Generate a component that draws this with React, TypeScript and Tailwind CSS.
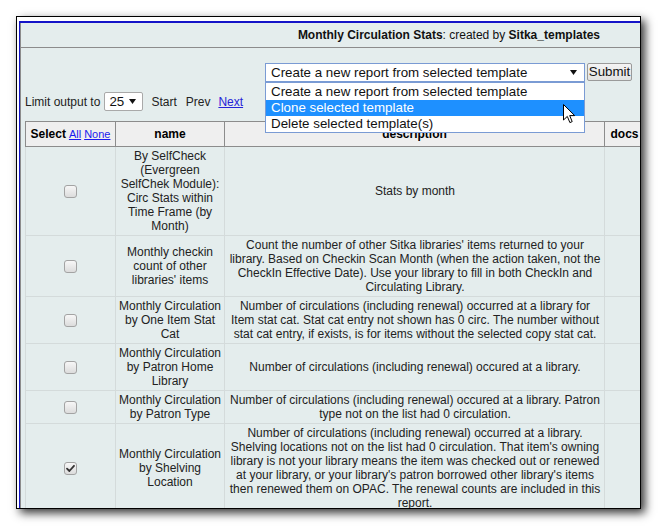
import React from "react";

const rows: { name: string; desc: string | string[]; checked?: boolean }[] = [
  {
    name: "By SelfCheck (Evergreen SelfChek Module): Circ Stats within Time Frame (by Month)",
    desc: "Stats by month",
  },
  {
    name: "Monthly checkin count of other libraries' items",
    desc: [
      "Count the number of other Sitka libraries' items returned to your",
      "library. Based on Checkin Scan Month (when the action taken, not the",
      "CheckIn Effective Date). Use your library to fill in both CheckIn and",
      "Circulating Library.",
    ],
  },
  {
    name: "Monthly Circulation by One Item Stat Cat",
    desc: "Number of circulations (including renewal) occurred at a library for Item stat cat. Stat cat entry not shown has 0 circ. The number without stat cat entry, if exists, is for items without the selected copy stat cat.",
  },
  {
    name: "Monthly Circulation by Patron Home Library",
    desc: "Number of circulations (including renewal) occured at a library.",
  },
  {
    name: "Monthly Circulation by Patron Type",
    desc: "Number of circulations (including renewal) occured at a library. Patron type not on the list had 0 circulation.",
  },
  {
    name: "Monthly Circulation by Shelving Location",
    desc: "Number of circulations (including renewal) occurred at a library. Shelving locations not on the list had 0 circulation. That item's owning library is not your library means the item was checked out or renewed at your library, or your library's patron borrowed other library's items then renewed them on OPAC. The renewal counts are included in this report.",
    checked: true,
  },
];

function Checkbox({ checked }: { checked?: boolean }) {
  return (
    <div className="w-[13px] h-[13px] rounded-[3px] border border-[#a3a3a3] bg-gradient-to-b from-[#f7f7f7] to-[#dcdcdc] flex items-center justify-center">
      {checked && (
        <svg width="9" height="9" viewBox="0 0 9 9">
          <path d="M1 4.6 L3.4 7 L8 1.8" fill="none" stroke="#333" strokeWidth="1.8" strokeLinecap="round" strokeLinejoin="round" />
        </svg>
      )}
    </div>
  );
}

function Tri({ className }: { className?: string }) {
  return (
    <svg width="7" height="5" viewBox="0 0 7 5" className={className}>
      <path d="M0 0 H7 L3.5 5 Z" fill="#111" />
    </svg>
  );
}

export default function App() {
  return (
    <div className="w-[658px] h-[526px] bg-white pl-[16px] pt-[16px] font-['Liberation_Sans',Arial,sans-serif] text-[12px] leading-[14px] text-[#222]">
      <div className="w-[625px] h-[493px] border border-black bg-white pl-[2px] pt-[4px] shadow-[4px_4px_9px_rgba(0,0,0,0.8)] overflow-hidden">
        <div className="h-full border-l border-t-2 border-[#1414c8]">
          <div className="h-full border-l border-[#8c8c8c] bg-[#e4eded]">
            {/* title bar */}
            <div className="h-[25px] border-b border-[#8c8c8c] flex items-center justify-end pr-[40px] text-[#111]">
              <span className="font-bold">Monthly Circulation Stats</span>
              <span>: created by&nbsp;</span>
              <span className="font-bold">Sitka_templates</span>
            </div>

            {/* action select row */}
            <div className="pt-[15px] pr-[8px] flex justify-end items-start">
              <div className="relative z-10">
                <div className="w-[320px] h-[19px] border border-[#7a9bd4] bg-white flex items-center pl-[5px] pr-[7px] text-[13.33px] leading-[16px] text-[#111]">
                  <span className="flex-1">Create a new report from selected template</span>
                  <Tri />
                </div>
                <div className="absolute left-0 top-[19px] w-[320px] border border-[#7a9bd4] bg-white text-[13.33px] leading-[16px] text-[#111]">
                  <div className="h-[17px] pl-[5px] flex items-center">Create a new report from selected template</div>
                  <div className="h-[16px] pl-[5px] flex items-center bg-[#1e90ff] text-white">Clone selected template</div>
                  <div className="h-[16px] pl-[5px] flex items-center">Delete selected template(s)</div>
                  <svg width="13" height="20" viewBox="0 0 13 20" className="absolute left-[297px] top-[21px]">
                    <path d="M0.5 0.5 L0.5 16 L4.3 12.4 L6.9 18.6 L9.2 17.6 L6.7 11.6 L11.7 11.6 Z" fill="white" stroke="black" strokeWidth="1" strokeLinejoin="round" />
                  </svg>
                </div>
              </div>
              <div className="ml-[2px] w-[45px] h-[18px] border border-[#9a9a9a] rounded-[2px] bg-gradient-to-b from-[#f4f4f4] to-[#e2e2e2] flex items-center justify-center text-[13.33px] leading-[16px] text-[#111]">
                Submit
              </div>
            </div>

            {/* limit row */}
            <div className="mt-[10px] pl-[4px] h-[19px] flex items-center">
              <span>Limit output to</span>
              <div className="ml-[4px] w-[39px] h-[19px] border border-[#a9a9a9] rounded-[2px] bg-white flex items-center pl-[4px] text-[13.33px] leading-[16px] text-[#111]">
                <span className="flex-1">25</span>
                <Tri className="mr-[6px]" />
              </div>
              <span className="ml-[8px]">Start</span>
              <span className="ml-[9px]">Prev</span>
              <span className="ml-[8px] text-[#2424d8] underline">Next</span>
            </div>

            {/* table */}
            <div className="mt-[10px] ml-[4px] w-[620px] grid grid-cols-[91px_109px_380px_40px]">
              <div className="h-[26px] border border-[#8c8c8c] bg-[#efefef] flex items-center justify-center text-black">
                <span className="font-bold">Select</span>
                <span className="ml-[3px] text-[11px] text-[#1a1aee] underline">All</span>
                <span className="ml-[3px] text-[11px] text-[#1a1aee] underline">None</span>
              </div>
              <div className="h-[26px] border-t border-r border-b border-[#8c8c8c] bg-[#efefef] flex items-center justify-center font-bold text-black">
                name
              </div>
              <div className="h-[26px] border-t border-r border-b border-[#8c8c8c] bg-[#efefef] flex items-center justify-center font-bold text-black">
                description
              </div>
              <div className="h-[26px] border-t border-r border-b border-[#8c8c8c] bg-[#efefef] flex items-center justify-center font-bold text-black">
                docs
              </div>

              {rows.map((r, i) => (
                <React.Fragment key={i}>
                  <div className="border-l border-r border-b border-[#d4dbdb] flex items-center justify-center">
                    <Checkbox checked={r.checked} />
                  </div>
                  <div className="border-r border-b border-[#d4dbdb] px-[2px] py-[2px] flex items-center justify-center text-center">
                    {r.name}
                  </div>
                  <div className="border-r border-b border-[#d4dbdb] pl-[2px] pr-[1px] py-[2px] flex items-center justify-center text-center">
                    {Array.isArray(r.desc) ? (
                      <div className="flex flex-col items-center">
                        {r.desc.map((l, j) => (
                          <span key={j} className="whitespace-nowrap">{l}</span>
                        ))}
                      </div>
                    ) : (
                      r.desc
                    )}
                  </div>
                  <div className="border-r border-b border-[#d4dbdb]" />
                </React.Fragment>
              ))}
            </div>
          </div>
        </div>
      </div>
    </div>
  );
}
